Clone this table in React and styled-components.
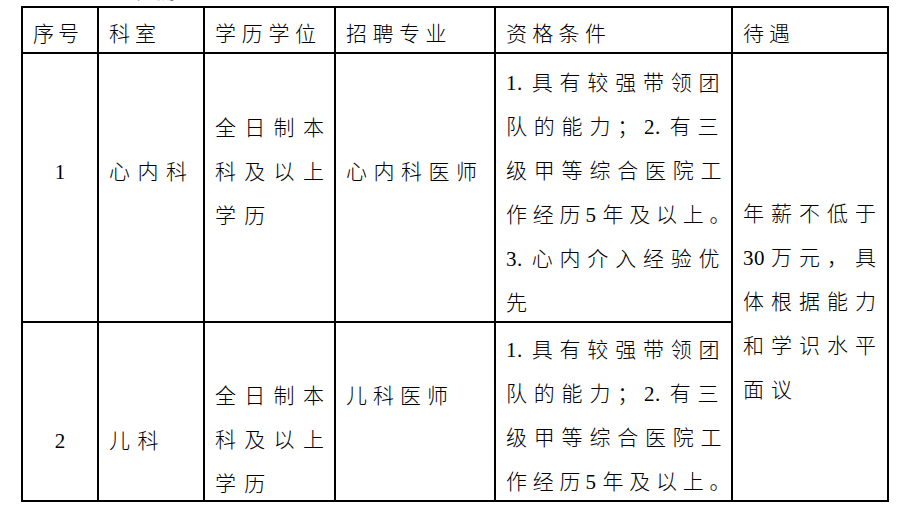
import React from "react";
import styled, { createGlobalStyle } from "styled-components";

const GlobalStyle = createGlobalStyle`
  html, body { margin: 0; padding: 0; background: #ffffff; }
  body {
    font-family: "Liberation Serif", "Noto Sans CJK SC", serif;
    color: #000;
  }
`;

const Page = styled.div`
  padding-left: 21px;
  width: 910px;
  box-sizing: border-box;
`;

const TitleStrip = styled.div`
  height: 6px;
  box-sizing: border-box;
  padding: 0 0 4px 92px;
  overflow: hidden;
  display: flex;
  align-items: flex-end;
`;

const Title = styled.span`
  font-size: 21px;
  line-height: 21px;
  letter-spacing: 0px;
  color: #777;
  font-weight: 300;
`;

const Grid = styled.div`
  display: grid;
  grid-template-columns: 76px 106px 131px 160px 237px 156px;
  grid-template-rows: 46px 269px 179px;
  width: max-content;
  border-top: 2px solid #000;
  border-left: 2px solid #000;
`;

const Cell = styled.div`
  box-sizing: border-box;
  border-right: 2px solid #000;
  border-bottom: 2px solid #000;
  padding-top: ${(p) => p.$top || 0}px;
  padding-left: ${(p) => (p.$center ? 0 : 10)}px;
  text-align: ${(p) => (p.$center ? "center" : "left")};
  grid-row: ${(p) => (p.$span ? `span ${p.$span}` : "auto")};
  font-size: 21px;
  line-height: 44px;
  font-weight: 300;
  letter-spacing: ${(p) => (p.$spacing != null ? p.$spacing : 6.8)}px;
  overflow: visible;
  white-space: nowrap;
`;

const HeadCell = styled(Cell)`
  padding-top: 4px;
`;

const Line = styled.div`
  display: block;
  ${(p) => (p.$spacing != null ? `letter-spacing: ${p.$spacing}px;` : "")}
`;

const Num = styled.span`
  letter-spacing: 0.5px;
  margin-left: ${(p) => (p.$lead ? 0 : -1)}px;
  margin-right: ${(p) => p.$gap}px;
`;

function renderLine(text, rich) {
  if (!rich) return text;
  const parts = text.split(/([0-9]+\.?)/);
  return parts.map((part, i) =>
    /^[0-9]/.test(part) ? (
      <Num
        key={i}
        $lead={i === 1 && parts[0] === ""}
        $gap={part.endsWith(".") ? 9 : 6}
      >
        {part}
      </Num>
    ) : (
      part
    )
  );
}

const headers = [
  { text: "序号", spacing: 4 },
  { text: "科室", spacing: 5 },
  { text: "学历学位", spacing: 5.7 },
  { text: "招聘专业", spacing: 5.5 },
  { text: "资格条件", spacing: 5.3 },
  { text: "待遇", spacing: 5 },
];

const workLine = { text: "作经历5年及以上。", spacing: 5.8 };

const rows = [
  [
    { lines: ["1"], top: 96, center: true, spacing: 0 },
    { lines: ["心内科"], top: 96, spacing: 7.5 },
    { lines: ["全日制本", "科及以上", "学历"], top: 52, spacing: 8.3 },
    { lines: ["心内科医师"], top: 96, spacing: 6.5 },
    {
      lines: [
        "1.具有较强带领团",
        "队的能力；2.有三",
        "级甲等综合医院工",
        workLine,
        "3.心内介入经验优",
        "先",
      ],
      top: 7,
      rich: true,
    },
    {
      lines: ["年薪不低于", "30万元，具", "体根据能力", "和学识水平", "面议"],
      top: 138,
      span: 2,
      spacing: 7,
      rich: true,
    },
  ],
  [
    { lines: ["2"], top: 96, center: true, spacing: 0 },
    { lines: ["儿科"], top: 96, spacing: 7.5 },
    { lines: ["全日制本", "科及以上", "学历"], top: 51, spacing: 8.3 },
    { lines: ["儿科医师"], top: 51, spacing: 6 },
    {
      lines: [
        "1.具有较强带领团",
        "队的能力；2.有三",
        "级甲等综合医院工",
        workLine,
      ],
      top: 5,
      rich: true,
    },
  ],
];

export default function App() {
  return (
    <>
      <GlobalStyle />
      <Page>
        <TitleStrip>
          <Title>岗位需求</Title>
        </TitleStrip>
        <Grid>
          {headers.map((h) => (
            <HeadCell key={h.text} $spacing={h.spacing}>
              {h.text}
            </HeadCell>
          ))}
          {rows.map((row, ri) =>
            row.map((c, ci) => (
              <Cell
                key={`${ri}-${ci}`}
                $top={c.top}
                $center={c.center}
                $span={c.span}
                $spacing={c.spacing}
              >
                {c.lines.map((l, li) => {
                  const line = typeof l === "string" ? { text: l } : l;
                  return (
                    <Line key={li} $spacing={line.spacing}>
                      {renderLine(line.text, c.rich)}
                    </Line>
                  );
                })}
              </Cell>
            ))
          )}
        </Grid>
      </Page>
    </>
  );
}
